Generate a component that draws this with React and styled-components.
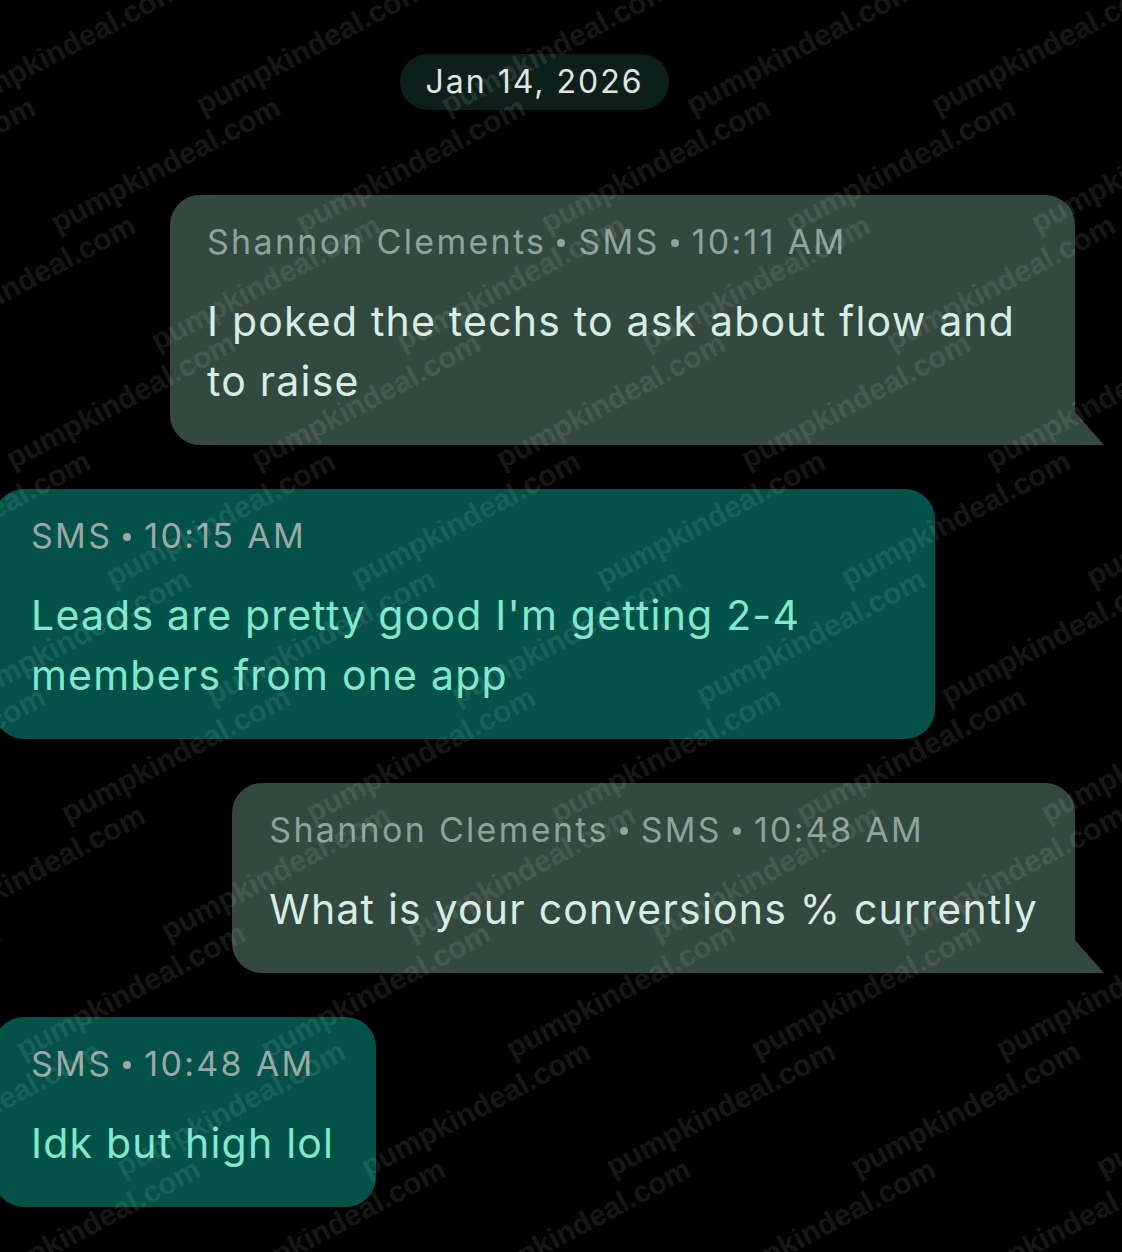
import React from 'react';
import styled, { createGlobalStyle, css } from 'styled-components';

const GlobalStyle = createGlobalStyle`
  html, body {
    margin: 0;
    padding: 0;
    background: #000;
  }
  body {
    font-family: Inter, "Noto Sans", sans-serif;
    -webkit-font-smoothing: antialiased;
  }
`;

const Screen = styled.div`
  position: relative;
  width: 1122px;
  height: 1252px;
  overflow: hidden;
  background: #000;
  box-sizing: border-box;
  padding-top: 54px;
  display: flex;
  flex-direction: column;
`;

const DateRow = styled.div`
  display: flex;
  justify-content: center;
  padding-right: 53px;
  margin-bottom: 85px;
`;

const DatePill = styled.div`
  background: #0d1f1b;
  color: #dfe6e2;
  font-size: 32px;
  line-height: 40px;
  letter-spacing: 2px;
  padding: 8px 25px;
  border-radius: 28px;
`;

const Thread = styled.div`
  display: flex;
  flex-direction: column;
  gap: 44px;
`;

const Row = styled.div`
  display: flex;
  justify-content: ${p => (p.$out ? 'flex-end' : 'flex-start')};
  padding-right: ${p => (p.$out ? '47px' : '0')};
  margin-left: ${p => (p.$out ? '0' : '-6px')};
`;

const Bubble = styled.div`
  position: relative;
  box-sizing: border-box;
  max-width: ${p => p.$max}px;
  padding: 23px ${p => (p.$out ? 37 : 42)}px 34px 37px;
  border-radius: 30px;
  background: ${p => (p.$out ? '#33483f' : '#02524a')};

  ${p => p.$out && css`
    border-bottom-right-radius: 0;
    &::after {
      content: '';
      position: absolute;
      right: -29px;
      bottom: 0;
      width: 30px;
      height: 34px;
      background: #33483f;
      clip-path: polygon(0 0, 100% 100%, 0 100%);
    }
  `}
`;

const Meta = styled.div`
  display: flex;
  align-items: center;
  font-size: 34px;
  line-height: 48px;
  letter-spacing: 2.3px;
  white-space: nowrap;
  color: ${p => (p.$out ? '#8ea39b' : '#9aa9a4')};
`;

const Dot = styled.span`
  width: 8px;
  height: 8px;
  margin: 2px 13px 0 11px;
  border-radius: 50%;
  background: currentColor;
  flex: none;
`;

const Text = styled.div`
  margin-top: 25px;
  font-size: 41px;
  line-height: 60px;
  letter-spacing: 1.2px;
  color: ${p => (p.$out ? '#d7ece4' : '#80e8cb')};
`;

const Watermarks = styled.div`
  position: absolute;
  inset: 0;
  pointer-events: none;
  overflow: hidden;
`;

const Mark = styled.span`
  position: absolute;
  font-family: "Liberation Sans", Arial, sans-serif;
  font-weight: 700;
  font-size: 30px;
  line-height: 30px;
  color: rgba(255, 255, 255, 0.1);
  white-space: nowrap;
  transform: rotate(-28deg);
  transform-origin: 0 100%;
`;

const messages = [
  {
    out: true,
    max: 905,
    meta: ['Shannon Clements', 'SMS', '10:11 AM'],
    text: 'I poked the techs to ask about flow and to raise',
  },
  {
    out: false,
    max: 941,
    meta: ['SMS', '10:15 AM'],
    text: "Leads are pretty good I'm getting 2-4 members from one app",
  },
  {
    out: true,
    max: 905,
    meta: ['Shannon Clements', 'SMS', '10:48 AM'],
    text: 'What is your conversions % currently',
  },
  {
    out: false,
    max: 905,
    meta: ['SMS', '10:48 AM'],
    text: 'Idk but high lol',
  },
];

// watermark lattice, positions computed at runtime
const marks = [];
for (let j = 0; j < 11; j++) {
  for (let i = -1; i < 5; i++) {
    const x = -40 + 245 * i + ((j * 100) % 245);
    const y = 120 + 118 * j;
    marks.push({ key: `${i}-${j}`, left: x, top: y - 30 });
  }
}

export default function App() {
  return (
    <>
      <GlobalStyle />
      <Screen>
        <DateRow>
          <DatePill>Jan 14, 2026</DatePill>
        </DateRow>
        <Thread>
          {messages.map((m, i) => (
            <Row key={i} $out={m.out}>
              <Bubble $out={m.out} $max={m.max}>
                <Meta $out={m.out}>
                  {m.meta.map((part, k) => (
                    <React.Fragment key={k}>
                      {k > 0 && <Dot />}
                      <span>{part}</span>
                    </React.Fragment>
                  ))}
                </Meta>
                <Text $out={m.out}>{m.text}</Text>
              </Bubble>
            </Row>
          ))}
        </Thread>
        <Watermarks>
          {marks.map(m => (
            <Mark key={m.key} style={{ left: m.left, top: m.top }}>pumpkindeal.com</Mark>
          ))}
        </Watermarks>
      </Screen>
    </>
  );
}
